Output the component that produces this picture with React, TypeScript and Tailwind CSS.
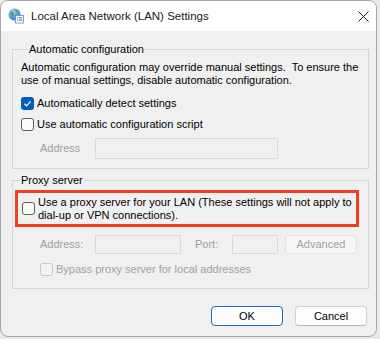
import React from 'react';

const font = { fontFamily: '"Liberation Sans", Arial, sans-serif' };

function Check({ checked = false, disabled = false }: { checked?: boolean; disabled?: boolean }) {
  if (checked) {
    return (
      <span className="flex h-[13px] w-[13px] shrink-0 items-center justify-center rounded-[3px] bg-[#005fb8]">
        <svg width="9" height="9" viewBox="0 0 9 9">
          <path d="M1.5 4.8 L3.6 6.8 L7.6 2.4" fill="none" stroke="#ffffff" strokeWidth="1.2" />
        </svg>
      </span>
    );
  }
  return (
    <span
      className={
        disabled
          ? 'h-[13px] w-[13px] shrink-0 rounded-[3px] border border-[#c8c8c8] bg-[#f3f3f3]'
          : 'h-[13px] w-[13px] shrink-0 rounded-[3px] border border-[#5c5c5c] bg-[#fbfbfb]'
      }
    />
  );
}

function NetIcon() {
  return (
    <svg width="16" height="16" viewBox="0 0 16 16">
      <defs>
        <radialGradient id="g" cx="0.35" cy="0.3" r="0.8">
          <stop offset="0" stopColor="#9fd3ff" />
          <stop offset="1" stopColor="#1f6fc9" />
        </radialGradient>
      </defs>
      <circle cx="6.5" cy="6.5" r="6" fill="url(#g)" />
      <path d="M2.5 4 C4 3 5 4.5 6 5 C6.5 6.5 5 7.5 4.5 9 C3.5 8 2.5 6 2.5 4 Z" fill="#3fae3a" />
      <path d="M7.5 2 C9 2 10.5 3 10.5 4 C9.5 4.5 8 4 7.5 2 Z" fill="#3fae3a" />
      <rect x="7.5" y="7.5" width="8" height="7.5" fill="#ffffff" stroke="#6a8cb8" strokeWidth="0.8" />
      <rect x="9" y="9.3" width="1.3" height="1" fill="#3a6fb5" />
      <rect x="11" y="9.3" width="3.3" height="1" fill="#3a6fb5" />
      <rect x="9" y="11.6" width="1.3" height="1" fill="#3a6fb5" />
      <rect x="11" y="11.6" width="3.3" height="1" fill="#3a6fb5" />
    </svg>
  );
}

export default function App() {
  return (
    <div className="h-[339px] w-[380px] overflow-hidden bg-[#e9e9e9] text-[11px] leading-[13px] text-[#000000]" style={font}>
      <div className="flex h-[337px] w-[377px] flex-col overflow-hidden rounded-[8px] border border-[#a8a8a8] bg-[#f0f0f0]">
        {/* title bar */}
        <div className="flex h-[30px] shrink-0 items-center bg-white pl-[7px] pr-[6px]">
          <NetIcon />
          <span className="ml-[7px] whitespace-nowrap text-[11.5px] text-[#1a1a1a]">Local Area Network (LAN) Settings</span>
          <svg className="ml-auto mr-[1px]" width="11" height="11" viewBox="0 0 11 11">
            <path d="M0.5 0.5 L10.5 10.5 M10.5 0.5 L0.5 10.5" stroke="#1a1a1a" strokeWidth="1" />
          </svg>
        </div>

        <div className="flex flex-col pl-[11px]">
          {/* automatic configuration */}
          <fieldset className="mt-[10px] h-[128px] w-[357px] border border-[#d5d5d5] pl-[8px]">
            <legend className="ml-[7px] whitespace-nowrap px-[1px] leading-[16px]">Automatic configuration</legend>
            <p className="mt-[4px] whitespace-nowrap">
              Automatic configuration may override manual settings.&nbsp; To ensure the
              <br />
              use of manual settings, disable automatic configuration.
            </p>
            <label className="mt-[10px] flex items-center gap-[3px] whitespace-nowrap">
              <Check checked />
              <span>Automatically detect settings</span>
            </label>
            <label className="mt-[8px] flex items-center gap-[3px] whitespace-nowrap">
              <Check />
              <span>Use automatic configuration script</span>
            </label>
            <div className="mt-[7px] flex items-center pl-[19px]">
              <span className="w-[55px] text-[#a0a0a0]">Address</span>
              <span className="h-[21px] w-[183px] border border-[#dadada]" />
            </div>
          </fieldset>

          {/* proxy server */}
          <fieldset className="mt-[3px] h-[117px] w-[357px] border border-[#d5d5d5]">
            <legend className="ml-[7px] whitespace-nowrap px-[1px] leading-[16px]">Proxy server</legend>
            <div className="ml-[2px] mt-[2px] flex h-[37px] w-[344px] items-center gap-[3px] border-[3px] border-[#ef3f1c] pl-[4px]">
              <Check />
              <span className="whitespace-nowrap">
                Use a proxy server for your LAN (These settings will not apply to
                <br />
                dial-up or VPN connections).
              </span>
            </div>
            <div className="mt-[8px] flex items-center pl-[27px] text-[#a0a0a0]">
              <span className="w-[55px]">Address:</span>
              <span className="h-[19px] w-[86px] border border-[#dadada]" />
              <span className="ml-[14px] w-[37px]">Port:</span>
              <span className="h-[19px] w-[46px] border border-[#dadada]" />
              <span className="ml-[7px] flex h-[19px] w-[72px] items-center justify-center rounded-[3px] border border-[#e3e3e3] bg-[#f6f6f6]">
                Advanced
              </span>
            </div>
            <label className="mt-[9px] flex items-center gap-[3px] whitespace-nowrap pl-[27px] text-[#a0a0a0]">
              <Check disabled />
              <span>Bypass proxy server for local addresses</span>
            </label>
          </fieldset>

          {/* buttons */}
          <div className="mt-[17px] flex justify-end gap-[12px] pr-[9px]">
            <button className="flex h-[20px] w-[72px] items-center justify-center rounded-[4px] border border-[#1f6fb8] bg-[#fdfdfd]">
              OK
            </button>
            <button className="flex h-[20px] w-[72px] items-center justify-center rounded-[4px] border border-[#d0d0d0] border-b-[#b8b8b8] bg-[#fdfdfd]">
              Cancel
            </button>
          </div>
        </div>
      </div>
    </div>
  );
}
